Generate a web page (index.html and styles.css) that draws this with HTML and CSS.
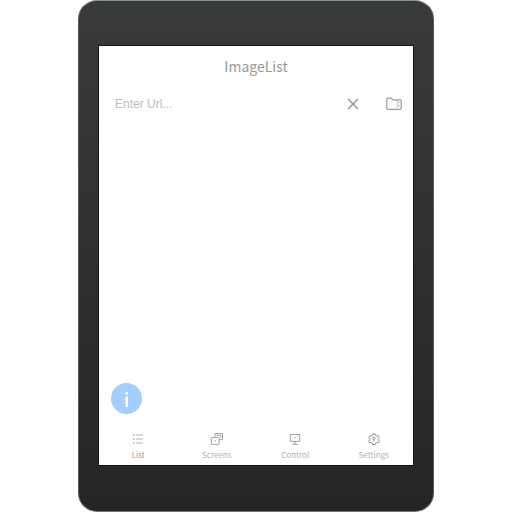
FILE: index.html
```html
<!DOCTYPE html>
<html lang="en">
<head>
<meta charset="utf-8">
<meta name="viewport" content="width=device-width, initial-scale=1">
<title>ImageList</title>
<link rel="stylesheet" href="styles.css">
</head>
<body>
<div class="tablet">
  <div class="screen">
    <header class="header"><h1 class="title">ImageList</h1></header>
    <form class="search">
      <input class="url" type="text" placeholder="Enter Url..." aria-label="Enter Url">
      <button class="icon-button" type="reset" aria-label="Clear">
        <svg width="12" height="12" viewBox="0 0 12 12" fill="none" stroke="#8b8b8b" stroke-width="1.3"><path d="M1 1l10 10M11 1L1 11"/></svg>
      </button>
      <button class="icon-button" type="button" aria-label="Browse folder">
        <svg width="16" height="14" viewBox="0 0 16 14" fill="none" stroke="#9a9a9a" stroke-width="1.2"><path d="M.8 2.2q0-1 1-1h3.400l1.600 1.600h7.400q1 0 1 1v7.600q0 1-1 1H1.800q-1 0-1-1z"/><path d="M10.500 4h1.500M12 5.500h1.500M10.500 7h1.500M12 8.500h1.500M10.500 10h1.500" stroke-width="1.200"/></svg>
      </button>
    </form>
    <main class="content">
      <button class="info" type="button" aria-label="Information">
        <svg width="31" height="31" viewBox="0 0 31 31" fill="#fff"><rect x="14.500" y="9" width="2.500" height="2.500"/><rect x="14.500" y="13.500" width="2.500" height="10.500"/></svg>
      </button>
    </main>
    <nav class="tabs">
      <a class="tab tab-active" href="#list">
        <svg width="14" height="12" viewBox="0 0 14 12" fill="none" stroke="#b0b0b0"><path d="M5 2h7M5 6h7M5 10h7"/><path d="M2 2h1.600M2 6h1.600M2 10h1.600" stroke-width="1.400"/></svg>
        <span>List</span>
      </a>
      <a class="tab" href="#screens">
        <svg width="14" height="12" viewBox="0 0 14 12" fill="none" stroke="#989898" stroke-width=".9"><path d="M5 4V.5h7.500v6.200H9.400"/><path d="M6.500 2.300h4.800M10 4.200h1.500"/><rect x="1.300" y="4.600" width="7.800" height="6.800" rx=".6"/><path d="M5.200 7.200v1.600"/></svg>
        <span>Screens</span>
      </a>
      <a class="tab" href="#control">
        <svg width="14" height="12" viewBox="0 0 14 12" fill="none" stroke="#969696" stroke-width=".9"><rect x="2.300" y="1.500" width="9.400" height="6.800"/><path d="M7 8.300v2.800M4 11.200h6M7 4v1.700"/></svg>
        <span>Control</span>
      </a>
      <a class="tab" href="#settings">
        <svg width="14" height="12" viewBox="0 0 14 12" fill="none" stroke="#868686" stroke-width=".9"><path d="M5.800.9h2.400l.4 1.500 1.100.6 1.500-.4 1.200 2-1.100 1.100v1.200l1.100 1.100-1.200 2-1.500-.4-1.100.6-.4 1.300H5.800l-.4-1.300-1.100-.6-1.500.4-1.200-2 1.100-1.100V5.700L1.600 4.600l1.200-2 1.500.4 1.100-.6z"/><path d="M7 8.500V6M5.600 5.200L7 4l1.400 1.200L7 6.500z"/></svg>
        <span>Settings</span>
      </a>
    </nav>
  </div>
</div>
</body>
</html>
```
FILE: styles.css
```css
* {
  box-sizing: border-box;
}

body {
  margin: 0;
  min-height: 100vh;
  display: flex;
  justify-content: center;
  background: #fff;
  font-family: "Noto Sans CJK SC", "Noto Sans", sans-serif;
}

.tablet {
  display: flex;
  height: 100vh;
  aspect-ratio: 356 / 512;
  padding: 45px 20px 46px;
  border: 1px solid #57595b;
  border-top-color: #8b9090;
  border-bottom-color: #77777a;
  border-radius: 19px;
  background: linear-gradient(#393b3b, #2f3131 50%, #242525);
}

.screen {
  flex: 1;
  display: flex;
  flex-direction: column;
  background: #fff;
  box-shadow: 0 0 0 1px #111416;
}

.header {
  padding-top: 8px;
  text-align: center;
}

.title {
  margin: 0;
  font-size: 14px;
  line-height: 24px;
  font-weight: 400;
  color: #999;
}

.search {
  display: flex;
  align-items: center;
  gap: 17px;
  margin-top: 14px;
  padding: 0 7px 0 16px;
}

.url {
  flex: 1;
  min-width: 0;
  height: 24px;
  padding: 0;
  border: 0;
  background: none;
  font: 12px "Liberation Sans", sans-serif;
  color: #777;
}

.url::placeholder {
  color: #bbb;
  opacity: 1;
}

.icon-button {
  display: flex;
  align-items: center;
  justify-content: center;
  width: 24px;
  height: 24px;
  padding: 0;
  border: 0;
  background: none;
}

.content {
  flex: 1;
  display: flex;
  align-items: flex-end;
  padding: 0 12px 19px;
}

.info {
  display: flex;
  width: 31px;
  height: 31px;
  padding: 0;
  border: 0;
  border-radius: 50%;
  background: #a6cdff;
}

.tabs {
  display: grid;
  grid-template-columns: repeat(4, 1fr);
  padding-bottom: 4px;
}

.tab {
  display: flex;
  flex-direction: column;
  align-items: center;
  gap: 4px;
  font-size: 8px;
  line-height: 12px;
  color: #b0b0b0;
  text-decoration: none;
}

.tab-active {
  color: #999;
}
```
